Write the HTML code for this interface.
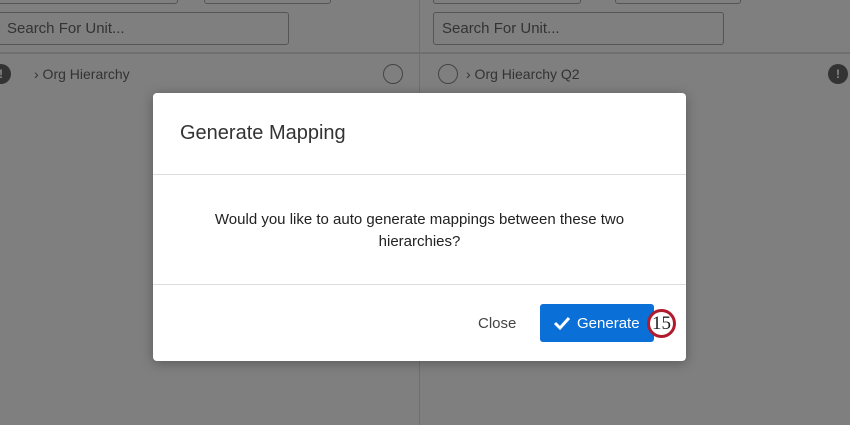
<!DOCTYPE html>
<html><head><style>
body{margin:0;width:850px;height:425px;overflow:hidden;background:#7f7f7f;font-family:"Liberation Sans",sans-serif;position:relative}
.a{position:absolute}
.box{position:absolute;border:1px solid #555;border-radius:3px;box-sizing:border-box}
.t{position:absolute;color:#333;font-size:15px}
</style></head><body>
<div class="box" style="left:-5px;top:-10px;width:183px;height:14px"></div>
<div class="box" style="left:204px;top:-10px;width:127px;height:14px"></div>
<div class="box" style="left:433px;top:-10px;width:148px;height:14px"></div>
<div class="box" style="left:615px;top:-10px;width:126px;height:14px"></div>
<div class="box" style="left:-2px;top:12px;width:291px;height:33px"></div>
<div class="box" style="left:433px;top:12px;width:291px;height:33px"></div>
<div class="t" style="left:7px;top:20px">Search For Unit...</div>
<div class="t" style="left:442px;top:20px">Search For Unit...</div>
<div class="a" style="left:0;top:52px;width:850px;height:2px;background:#6f6f6f"></div>
<div class="a" style="left:419px;top:0;width:1px;height:425px;background:#6f6f6f"></div>
<div class="a" style="left:-9px;top:64px;width:20px;height:20px;border-radius:50%;background:#333;color:#888;font-size:12px;text-align:center;line-height:20px;font-weight:bold">!</div>
<div class="t" style="left:34px;top:66px;font-size:14px">›&nbsp;Org Hierarchy</div>
<div class="a" style="left:383px;top:64px;width:18px;height:18px;border-radius:50%;border:1px solid #444"></div>
<div class="a" style="left:438px;top:64px;width:18px;height:18px;border-radius:50%;border:1px solid #444"></div>
<div class="t" style="left:466px;top:66px;font-size:14px">›&nbsp;Org Hiearchy Q2</div>
<div class="a" style="left:828px;top:64px;width:20px;height:20px;border-radius:50%;background:#333;color:#888;font-size:12px;text-align:center;line-height:20px;font-weight:bold">!</div>

<div class="a" style="left:153px;top:93px;width:533px;height:268px;background:#fff;border-radius:4px;box-shadow:0 2px 12px rgba(0,0,0,.3)">
<div class="a" style="left:27px;top:29px;font-size:20px;color:#333">Generate Mapping</div>
<div class="a" style="left:0;top:81px;width:533px;height:1px;background:#ddd"></div>
<div class="a" style="left:0;top:116px;width:533px;text-align:center;font-size:15px;line-height:22px;color:#222">Would you like to auto generate mappings between these two<br>hierarchies?</div>
<div class="a" style="left:0;top:191px;width:533px;height:1px;background:#ddd"></div>
<div class="a" style="left:325px;top:222px;font-size:15px;color:#444">Close</div>
<div class="a" style="left:387px;top:211px;width:114px;height:38px;background:#0a6fd6;border-radius:3px;color:#fff;font-size:15px;line-height:38px">
<svg class="a" style="left:13px;top:11px" width="18" height="16" viewBox="0 0 18 16"><path d="M2 8l5 5 9-10" stroke="#fff" stroke-width="3" fill="none"/></svg>
<span class="a" style="left:37px;top:1px">Generate</span></div>
</div>
<div class="a" style="left:647px;top:309px;width:29px;height:29px;border-radius:50%;border:3px solid #b01c2e;background:#fff;box-sizing:border-box;text-align:center;line-height:23px;font-size:19px;font-family:'Liberation Serif',serif;color:#222">15</div>
</body></html>
